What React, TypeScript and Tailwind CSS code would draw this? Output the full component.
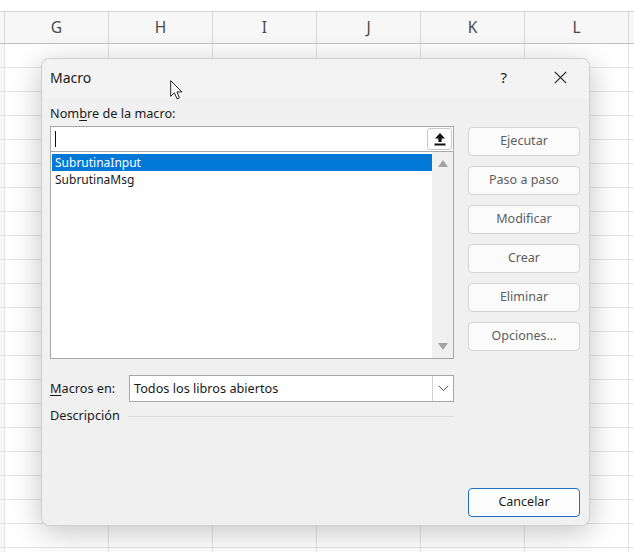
import React from 'react'

const FONT = { fontFamily: '"Noto Sans", "Open Sans", Arial, sans-serif' }

const COLUMNS = ['G', 'H', 'I', 'J', 'K', 'L']
const ACTIONS = ['Ejecutar', 'Paso a paso', 'Modificar', 'Crear', 'Eliminar', 'Opciones...']
const MACROS = ['SubrutinaInput', 'SubrutinaMsg']

function Sheet() {
  const rows = Array.from({ length: 22 })
  return (
    <div className="flex h-[552px] w-[634px] flex-col overflow-hidden bg-white" style={FONT}>
      <div className="h-[12px] shrink-0 border-b border-[#d4d4d4] bg-white" />
      <div className="flex h-[32px] shrink-0 border-b border-[#c2c2c2] bg-[#f7f7f7] text-[15.5px] text-[#4a4a4a]">
        <div className="w-[5px] shrink-0 border-r border-[#dadada]" />
        {COLUMNS.map((c) => (
          <div
            key={c}
            className="flex w-[104px] shrink-0 items-center justify-center border-r border-[#dadada]"
          >
            {c}
          </div>
        ))}
        <div className="flex-1" />
      </div>
      {rows.map((_, i) => (
        <div key={i} className="flex h-[24px] shrink-0 border-b border-[#e3e3e3]">
          <div className="w-[5px] shrink-0 border-r border-[#e3e3e3] bg-[#f7f7f7]" />
          {COLUMNS.map((c) => (
            <div key={c} className="w-[104px] shrink-0 border-r border-[#e3e3e3]" />
          ))}
          <div className="flex-1" />
        </div>
      ))}
    </div>
  )
}

function UploadIcon() {
  return (
    <svg width="12" height="14" viewBox="0 0 12 14">
      <path d="M6 1 L11 6.5 L7.6 6.5 L7.6 10 L4.4 10 L4.4 6.5 L1 6.5 Z" fill="#111" />
      <rect x="0.5" y="11.5" width="11" height="2" fill="#111" />
    </svg>
  )
}

function Triangle({ down }: { down?: boolean }) {
  return (
    <svg width="10" height="7" viewBox="0 0 10 7">
      <path d={down ? 'M0 0 L10 0 L5 7 Z' : 'M0 7 L10 7 L5 0 Z'} fill="#a3a3a3" />
    </svg>
  )
}

function Chevron() {
  return (
    <svg width="11" height="7" viewBox="0 0 11 7">
      <path d="M0.7 0.8 L5.5 5.6 L10.3 0.8" fill="none" stroke="#4a4a4a" strokeWidth="1" />
    </svg>
  )
}

function CloseIcon() {
  return (
    <svg width="13" height="13" viewBox="0 0 13 13">
      <path d="M0.8 0.8 L12.2 12.2 M12.2 0.8 L0.8 12.2" stroke="#222" strokeWidth="1.2" />
    </svg>
  )
}

function Cursor() {
  return (
    <svg width="13" height="20" viewBox="0 0 13 20">
      <path
        d="M0.7 0.7 L0.7 16.3 L4.4 12.8 L7 18.8 L9.4 17.8 L6.9 11.9 L11.9 11.9 Z"
        fill="#fff"
        stroke="#222"
        strokeWidth="1"
        strokeLinejoin="round"
      />
    </svg>
  )
}

function DialogButton({ label, primary }: { label: string; primary?: boolean }) {
  return (
    <button
      type="button"
      className={
        primary
          ? 'h-[29px] w-[112px] rounded-[4px] border border-[#1e6fbf] bg-[#fdfdfd] text-[12.5px] text-[#1a1a1a]'
          : 'h-[29px] w-[112px] rounded-[4px] border border-[#d3d3d3] bg-[#fbfbfb] text-[12.5px] text-[#5e5e5e]'
      }
    >
      {label}
    </button>
  )
}

function MacroDialog() {
  return (
    <div
      className="absolute left-[41px] top-[58px] flex h-[468px] w-[549px] flex-col rounded-[8px] border border-[#cfcfcf] bg-[#f0f0f0] text-[12.7px] text-[#1a1a1a] shadow-[0_6px_30px_rgba(0,0,0,0.24)]"
      style={FONT}
    >
      <div className="flex h-[39px] shrink-0 items-center rounded-t-[8px] bg-[#f3f3f3] pb-[2px] pl-[8px]">
        <span className="text-[14px]">Macro</span>
        <span className="ml-auto mr-[47px] text-[15px] text-[#222]">?</span>
        <span className="mr-[22px] flex items-center">
          <CloseIcon />
        </span>
      </div>

      <div className="flex flex-1 pl-[8px] pr-[9px] pb-[8px]">
        <div className="flex w-[404px] flex-col">
          <div className="mt-[6px] h-[18px] leading-[18px]">
            Nom<span className="underline underline-offset-2">b</span>re de la macro:
          </div>
          <div className="mt-[4px] flex h-[26px] items-center border border-[#a8a8a8] bg-white pl-[4px] pr-[1px]">
            <div className="h-[16px] w-px bg-[#111]" />
            <div className="ml-auto flex h-[22px] w-[25px] items-center justify-center rounded-[3px] border border-[#c8c8c8] bg-white">
              <UploadIcon />
            </div>
          </div>
          <div className="flex h-[207px] border border-t-0 border-[#a8a8a8] bg-white text-[12px]">
            <div className="flex flex-1 flex-col pl-[1px] pt-[2px]">
              {MACROS.map((m, i) => (
                <div
                  key={m}
                  className={
                    i === 0
                      ? 'h-[17px] bg-[#0078d7] pl-[3px] leading-[17px] text-white'
                      : 'h-[18px] pl-[3px] leading-[18px]'
                  }
                >
                  {m}
                </div>
              ))}
            </div>
            <div className="flex w-[21px] flex-col items-center justify-between bg-[#f0f0f0] py-[8px]">
              <Triangle />
              <Triangle down />
            </div>
          </div>

          <div className="mt-[16px] flex h-[27px] items-center">
            <span className="w-[79px] shrink-0">
              <span className="underline underline-offset-2">M</span>acros en:
            </span>
            <div className="flex h-[27px] flex-1 items-center border border-[#a8a8a8] bg-white pl-[4px]">
              <span>Todos los libros abiertos</span>
              <div className="ml-auto flex h-full w-[21px] items-center justify-center border-l border-[#d0d0d0]">
                <Chevron />
              </div>
            </div>
          </div>

          <div className="mt-[5px] flex h-[18px] items-center">
            <span>Descripción</span>
            <div className="ml-[8px] h-px flex-1 bg-[#dcdcdc]" />
          </div>
        </div>

        <div className="ml-[14px] flex w-[112px] flex-col pt-[29px]">
          <div className="flex flex-col gap-[10px]">
            {ACTIONS.map((a) => (
              <DialogButton key={a} label={a} />
            ))}
          </div>
          <div className="mt-auto">
            <DialogButton label="Cancelar" primary />
          </div>
        </div>
      </div>
    </div>
  )
}

export default function App() {
  return (
    <div className="relative h-[552px] w-[634px] overflow-hidden">
      <Sheet />
      <MacroDialog />
      <div className="absolute left-[170px] top-[80px]">
        <Cursor />
      </div>
    </div>
  )
}
